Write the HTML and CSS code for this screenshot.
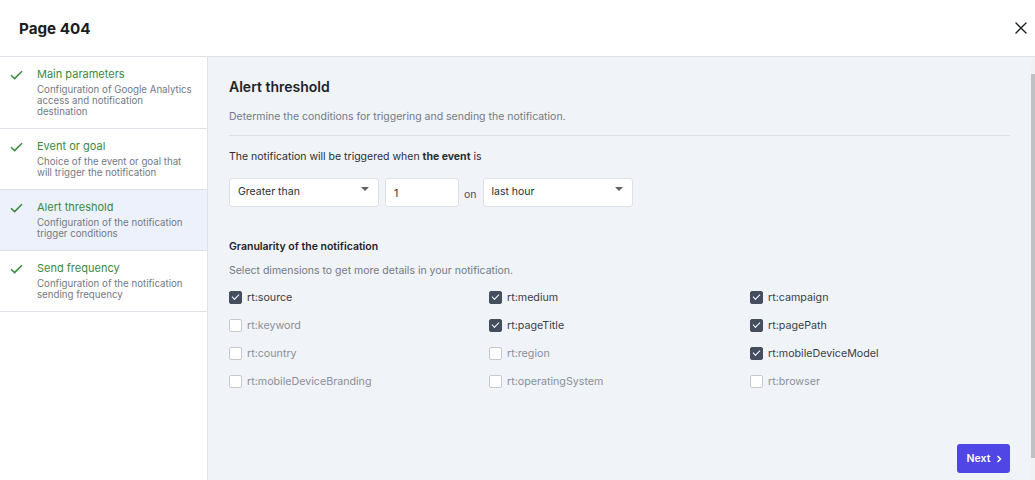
FILE: index.html
```html
<!DOCTYPE html>
<html>
<head>
<meta charset="utf-8">
<link rel="stylesheet" href="styles.css">
</head>
<body>
<div class="modal">
  <header class="header">
    <h1 class="title">Page 404</h1>
    <button class="close" aria-label="Close">
      <svg width="12" height="12" viewBox="0 0 12 12"><path d="M1 1L11 11M11 1L1 11" stroke="#1f2328" stroke-width="1.4" stroke-linecap="round"/></svg>
    </button>
  </header>
  <div class="body">
    <nav class="sidebar">
      <div class="step">
        <svg class="check" width="13" height="10" viewBox="0 0 13 10"><path d="M1 5.2L4.6 8.6L12 1.2" fill="none" stroke="#3a8a3e" stroke-width="1.5"/></svg>
        <div class="step-text">
          <div class="step-title">Main parameters</div>
          <div class="step-desc">Configuration of Google Analytics access and notification destination</div>
        </div>
      </div>
      <div class="step">
        <svg class="check" width="13" height="10" viewBox="0 0 13 10"><path d="M1 5.2L4.6 8.6L12 1.2" fill="none" stroke="#3a8a3e" stroke-width="1.5"/></svg>
        <div class="step-text">
          <div class="step-title">Event or goal</div>
          <div class="step-desc">Choice of the event or goal that will trigger the notification</div>
        </div>
      </div>
      <div class="step active">
        <svg class="check" width="13" height="10" viewBox="0 0 13 10"><path d="M1 5.2L4.6 8.6L12 1.2" fill="none" stroke="#3a8a3e" stroke-width="1.5"/></svg>
        <div class="step-text">
          <div class="step-title">Alert threshold</div>
          <div class="step-desc">Configuration of the notification trigger conditions</div>
        </div>
      </div>
      <div class="step">
        <svg class="check" width="13" height="10" viewBox="0 0 13 10"><path d="M1 5.2L4.6 8.6L12 1.2" fill="none" stroke="#3a8a3e" stroke-width="1.5"/></svg>
        <div class="step-text">
          <div class="step-title">Send frequency</div>
          <div class="step-desc">Configuration of the notification sending frequency</div>
        </div>
      </div>
    </nav>
    <main class="main">
      <h2 class="section-title">Alert threshold</h2>
      <p class="muted first">Determine the conditions for triggering and sending the notification.</p>
      <div class="divider"></div>
      <p class="lead">The notification will be triggered when <b>the event</b> is</p>
      <div class="controls">
        <div class="select wide"><span>Greater than</span><span class="caret"></span></div>
        <div class="input num">1</div>
        <span class="on">on</span>
        <div class="select wide"><span>last hour</span><span class="caret"></span></div>
      </div>
      <h3 class="sub-title">Granularity of the notification</h3>
      <p class="muted dims">Select dimensions to get more details in your notification.</p>
      <div class="grid">
        <label class="cb on-state"><span class="box"></span>rt:source</label>
        <label class="cb on-state"><span class="box"></span>rt:medium</label>
        <label class="cb on-state"><span class="box"></span>rt:campaign</label>
        <label class="cb"><span class="box"></span>rt:keyword</label>
        <label class="cb on-state"><span class="box"></span>rt:pageTitle</label>
        <label class="cb on-state"><span class="box"></span>rt:pagePath</label>
        <label class="cb"><span class="box"></span>rt:country</label>
        <label class="cb"><span class="box"></span>rt:region</label>
        <label class="cb on-state"><span class="box"></span>rt:mobileDeviceModel</label>
        <label class="cb"><span class="box"></span>rt:mobileDeviceBranding</label>
        <label class="cb"><span class="box"></span>rt:operatingSystem</label>
        <label class="cb"><span class="box"></span>rt:browser</label>
      </div>
      <div class="footer">
        <button class="next">Next <svg width="6" height="8" viewBox="0 0 6 8"><path d="M1.5 1L4.5 4L1.5 7" fill="none" stroke="#fff" stroke-width="1.5"/></svg></button>
      </div>
    </main>
    <div class="scrollbar"><div class="thumb"></div></div>
  </div>
</div>
</body>
</html>
```

FILE: styles.css
```css
* { box-sizing: border-box; }
html, body { margin: 0; padding: 0; }
body {
  font-family: Inter, "Noto Sans", sans-serif;
  color: #1f2328;
  background: #fff;
  width: 1035px;
  height: 480px;
  overflow: hidden;
}
.modal { display: flex; flex-direction: column; height: 480px; }
.header {
  height: 57px;
  flex: none;
  display: flex;
  align-items: center;
  justify-content: space-between;
  padding: 0 4px 0 19px;
  border-bottom: 1px solid #dfe2e7;
}
.title { margin: 0; font-size: 15.2px; font-weight: 700; color: #1a1d21; }
.close { border: 0; background: none; padding: 4px; display: flex; cursor: pointer; }
.body { flex: 1; display: flex; min-height: 0; }
.sidebar {
  width: 208px;
  flex: none;
  border-right: 1px solid #dfe2e7;
  background: #fff;
}
.step {
  display: flex;
  gap: 14px;
  padding: 9px 0 11px 10px;
  border-bottom: 1px solid #dfe2e7;
}
.step.active { background: #edf1fb; }
.check { flex: none; margin-top: 4px; }
.step-text { flex: none; width: 158px; }
.step-title { font-size: 11px; line-height: 16px; color: #3a8a3e; }
.step-desc { font-size: 9.7px; line-height: 11px; color: #737a84; margin-top: 2px; }
.main {
  flex: 1;
  background: #f0f3f8;
  padding: 20px 21px 7px 21px;
  display: flex;
  flex-direction: column;
}
.section-title { margin: 0; font-size: 14px; line-height: 20px; font-weight: 600; color: #1f2328; }
.muted { margin: 0; font-size: 10.5px; line-height: 16px; color: #737a84; }
.muted.first { margin-top: 12px; }
.divider { height: 1px; background: #dde1e6; margin-top: 10px; }
.lead { margin: 13px 0 0; font-size: 10.5px; line-height: 16px; color: #2a2e33; }
.lead b { font-weight: 700; }
.controls { display: flex; align-items: center; gap: 6px; margin-top: 13px; }
.select, .input {
  height: 29px;
  background: #fff;
  border: 1px solid #dde1e6;
  border-radius: 3px;
  font-size: 10.5px;
  color: #2a2e33;
  display: flex;
  align-items: center;
}
.select { width: 150px; justify-content: space-between; padding: 0 9px 3px 8px; }
.input.num { width: 74px; padding: 1px 8px 0; }
.caret {
  width: 0; height: 0;
  border-left: 4px solid transparent;
  border-right: 4px solid transparent;
  border-top: 4px solid #5b6168;
  margin-bottom: 4px;
}
.on { font-size: 10.5px; color: #4a4f56; padding-top: 3px; margin: 0 0 0 -1px; }
.sub-title { margin: 32px 0 0; font-size: 10.5px; line-height: 16px; font-weight: 600; color: #1f2328; }
.muted.dims { margin-top: 8px; }
.grid {
  display: grid;
  grid-template-columns: 260px 261px 1fr;
  grid-auto-rows: 28px;
  margin-top: 4px;
}
.cb { display: flex; align-items: center; gap: 5px; font-size: 10.7px; color: #8b9099; }
.box {
  width: 13px; height: 13px;
  border: 1px solid #c5c9cf;
  border-radius: 2px;
  background: #fff;
  flex: none;
  display: flex; align-items: center; justify-content: center;
}
.cb.on-state { color: #3a3f46; }
.cb.on-state .box {
  background: #444e5e;
  border-color: #444e5e;
}
.cb.on-state .box::after {
  content: "";
  width: 6px; height: 3px;
  border-left: 1.3px solid #fff;
  border-bottom: 1.3px solid #fff;
  transform: translateY(-1px) rotate(-45deg);
}
.footer { margin-top: auto; display: flex; justify-content: flex-end; }
.next {
  height: 29px;
  width: 53px;
  border: 0;
  border-radius: 3px;
  background: #5046e5;
  color: #fff;
  font-family: inherit;
  font-size: 10.5px;
  font-weight: 600;
  display: flex; align-items: center; justify-content: center; gap: 6px;
  padding: 0 0 0 2px;
}
.scrollbar { width: 4px; flex: none; background: #f1f1f1; }
.thumb { margin-top: 17px; height: 384px; background: #c1c1c1; }
```
